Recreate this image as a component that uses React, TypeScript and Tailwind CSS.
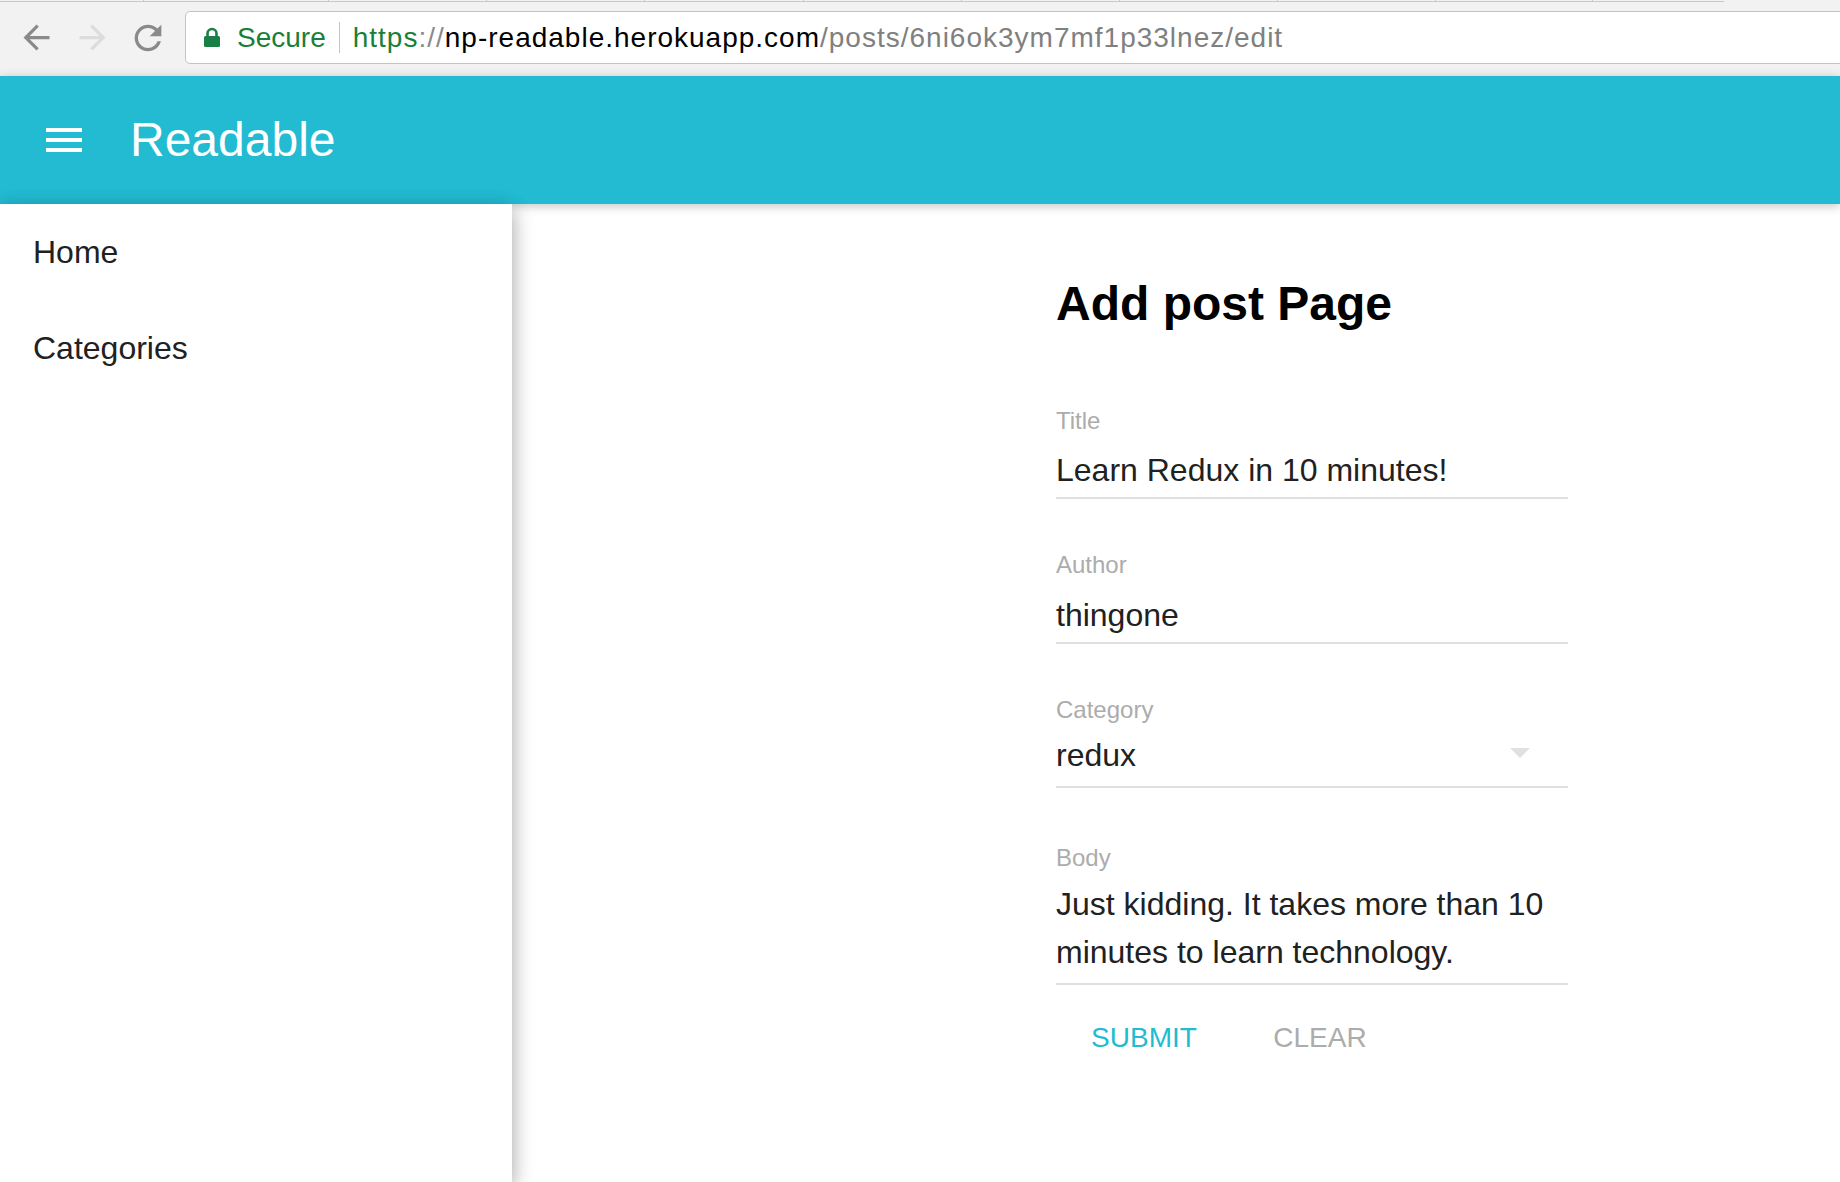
import React from "react"

const tabWidths = [
  "w-[144px]",
  "w-[185px]",
  "w-[158px]",
  "w-[158px]",
  "w-[159px]",
  "w-[158px]",
  "w-[158px]",
  "w-[158px]",
  "w-[158px]",
  "w-[157px]",
  "w-[131px]",
]

const BrowserBar = () => {
  return (
    <div className="h-[76px] bg-[#f2f2f2]">
      <div className="flex h-[2px] w-[1724px] border-b border-[#c8c8c8]">
        {tabWidths.map((w, i) => (
          <div
            key={i}
            className={`${w} h-full ${i < tabWidths.length - 1 ? "border-r border-[#c8c8c8]" : ""}`}
          />
        ))}
      </div>
      <div className="mt-[9px] flex h-[53px] items-center pl-[8px]">
        <div className="flex w-[56px] items-center justify-center">
          <svg width="39" height="39" viewBox="0 0 24 24" fill="#8a8a8a">
            <path d="M20 11H7.83l5.59-5.59L12 4l-8 8 8 8 1.41-1.41L7.83 13H20v-2z" />
          </svg>
        </div>
        <div className="flex w-[56px] items-center justify-center">
          <svg width="39" height="39" viewBox="0 0 24 24" fill="#dcdcdc">
            <path d="M12 4l-1.41 1.41L16.17 11H4v2h12.17l-5.58 5.59L12 20l8-8z" />
          </svg>
        </div>
        <div className="flex w-[56px] items-center justify-center">
          <svg width="40" height="40" viewBox="0 0 24 24" fill="#8a8a8a">
            <path d="M17.65 6.35C16.2 4.9 14.21 4 12 4c-4.42 0-7.99 3.58-7.99 8s3.57 8 7.99 8c3.73 0 6.84-2.55 7.73-6h-2.08c-.82 2.33-3.04 4-5.65 4-3.31 0-6-2.69-6-6s2.69-6 6-6c1.66 0 3.14.69 4.22 1.78L13 11h7V4l-2.35 2.35z" />
          </svg>
        </div>
        <div className="ml-[9px] mr-[-20px] flex h-[53px] flex-1 items-center rounded-[5px] border border-[#c4c4c4] bg-white pl-[17px] text-[28px] leading-none">
          <svg width="18" height="21" viewBox="0 0 18 21" className="mt-[-1px]">
            <path d="M4.5 9.5V6.5a4.5 4.5 0 0 1 9 0v3" fill="none" stroke="#1a7f45" strokeWidth="2.6" />
            <rect x="1" y="9" width="16" height="11" rx="1.5" fill="#1a7f45" />
          </svg>
          <span className="ml-[16px] text-[#188038]">Secure</span>
          <span className="ml-[13px] h-[31px] w-px bg-[#c4c4c4]" />
          <span className="ml-[13px] whitespace-nowrap tracking-[1px]">
            <span className="text-[#188038]">https</span>
            <span className="text-[#8a8a8a]">://</span>
            <span className="text-black">np-readable.herokuapp.com</span>
            <span className="text-[#808080]">/posts/6ni6ok3ym7mf1p33lnez/edit</span>
          </span>
        </div>
      </div>
    </div>
  )
}

const Field = ({
  label,
  children,
  labelGap = "mt-[21px]",
  lineGap = "mt-[11px]",
}: {
  label: string
  children: React.ReactNode
  labelGap?: string
  lineGap?: string
}) => {
  return (
    <div>
      <div className="text-[24px] leading-none text-[#acacac]">{label}</div>
      <div className={labelGap}>{children}</div>
      <div className={`${lineGap} h-[2px] w-full bg-[#e0e0e0]`} />
    </div>
  )
}

export default function App() {
  return (
    <div className="h-[1182px] w-[1840px] overflow-hidden bg-white font-['Liberation_Sans',Arial,sans-serif]">
      <BrowserBar />

      <header className="relative z-10 flex h-[128px] items-center bg-[#22bbd2] shadow-[0_2px_12px_rgba(0,0,0,0.12),0_2px_8px_rgba(0,0,0,0.12)]">
        <div className="ml-[46px] flex w-[36px] flex-col gap-[6px]">
          <span className="h-[4px] bg-white" />
          <span className="h-[4px] bg-white" />
          <span className="h-[4px] bg-white" />
        </div>
        <h1 className="ml-[48px] text-[48px] font-normal leading-none text-white">Readable</h1>
      </header>

      <div className="flex h-[978px]">
        <nav className="relative z-20 w-[512px] shrink-0 bg-white shadow-[0_6px_20px_rgba(0,0,0,0.16),0_6px_20px_rgba(0,0,0,0.23)]">
          <div className="flex h-[96px] items-center pl-[33px] text-[32px] leading-none text-[#212121]">
            Home
          </div>
          <div className="flex h-[96px] items-center pl-[33px] text-[32px] leading-none text-[#212121]">
            Categories
          </div>
        </nav>

        <main className="flex-1 bg-white">
          <div className="ml-[544px] w-[512px]">
            <h2 className="mt-[76px] text-[48px] font-bold leading-none text-black">Add post Page</h2>

            <div className="mt-[81px]">
              <Field label="Title">
                <div className="text-[32px] leading-none text-[#212121]">Learn Redux in 10 minutes!</div>
              </Field>
            </div>

            <div className="mt-[54px]">
              <Field label="Author" labelGap="mt-[22px]">
                <div className="text-[32px] leading-none text-[#212121]">thingone</div>
              </Field>
            </div>

            <div className="mt-[54px]">
              <Field label="Category" labelGap="mt-[17px]" lineGap="mt-[15px]">
                <div className="flex items-start justify-between">
                  <div className="text-[32px] leading-none text-[#212121]">redux</div>
                  <svg width="20" height="10" viewBox="0 0 20 10" className="mr-[38px] mt-[9px]">
                    <path d="M0 0h20L10 10z" fill="#e0e0e0" />
                  </svg>
                </div>
              </Field>
            </div>

            <div className="mt-[58px]">
              <Field label="Body" labelGap="mt-[10px]" lineGap="mt-[7px]">
                <p className="text-[32px] leading-[48px] text-[#212121]">
                  Just kidding. It takes more than 10
                  <br />
                  minutes to learn technology.
                </p>
              </Field>
            </div>

            <div className="mt-[17px] flex">
              <button className="flex h-[72px] w-[176px] items-center justify-center text-[28px] uppercase leading-none text-[#22bbd2]">
                Submit
              </button>
              <button className="flex h-[72px] w-[176px] items-center justify-center text-[28px] uppercase leading-none text-[#acacac]">
                Clear
              </button>
            </div>
          </div>
        </main>
      </div>
    </div>
  )
}
